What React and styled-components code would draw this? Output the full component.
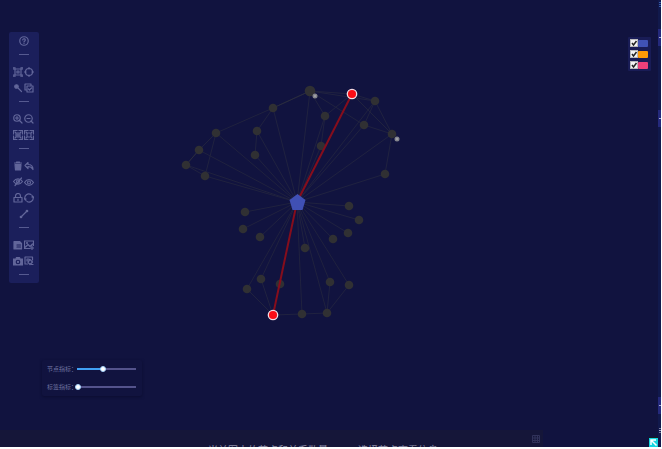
import React, { useState } from "react";
import styled, { createGlobalStyle } from "styled-components";

const Global = createGlobalStyle`
  * { box-sizing: border-box; }
  body {
    margin: 0;
    background: #fff;
    overflow: hidden;
    font-family: "Liberation Sans", "Noto Sans CJK SC", sans-serif;
  }
`;

const Page = styled.div`
  display: flex;
  height: 100vh;
  padding: 0 1px 2px 0;
`;

const Workspace = styled.main`
  position: relative;
  flex: 1;
  min-width: 0;
  display: flex;
  flex-direction: column;
  overflow: hidden;
  background: #11133f;
`;

const GraphCanvas = styled.svg`
  position: absolute;
  inset: 0;
  width: 100%;
  height: 100%;
`;

const Panels = styled.div`
  position: relative;
  flex: 1;
  min-height: 0;
  display: flex;
  justify-content: space-between;
  align-items: flex-start;
  padding: 32px 7px 0 9px;
`;

const LeftColumn = styled.div`
  display: flex;
  flex-direction: column;
  align-items: flex-start;
`;

const Toolbar = styled.div`
  width: 30px;
  padding: 1px 4px 8px;
  border-radius: 2px;
  background: #1b1f5b;
`;

const ToolRow = styled.div`
  display: flex;
  justify-content: center;
  align-items: center;
  height: 16px;
`;

const ToolButton = styled.button`
  display: grid;
  place-items: center start;
  width: 11px;
  height: 11px;
  padding: 0;
  border: 0;
  background: none;
  color: #62669a;
`;

const ToolIcon = styled.svg`
  display: block;
  width: 10px;
  height: 10px;
  fill: none;
  stroke: currentColor;
  stroke-width: 2.4;
  stroke-linecap: round;
  stroke-linejoin: round;
`;

const Divider = styled.hr`
  width: 10px;
  height: 1px;
  margin: 5px auto 9px;
  border: 0;
  background: #565a90;
  &:last-child { margin-bottom: 0; }
`;

const SliderPanel = styled.div`
  display: flex;
  flex-direction: column;
  gap: 8px;
  width: 100px;
  margin: 77px 0 0 33px;
  padding: 4px 4px 4px 5px;
  border-radius: 2px;
  box-shadow: 0 1px 3px #0b0d30;
`;

const SliderRow = styled.label`
  display: flex;
  align-items: center;
  height: 10px;
  font-size: 6px;
  line-height: 10px;
  color: #7073a0;
  white-space: nowrap;
`;

const SliderName = styled.span`
  width: 28px;
`;

const Range = styled.input`
  flex: 1;
  min-width: 0;
  height: 6px;
  margin: 0;
  appearance: none;
  border-radius: 1px;
  background:
    linear-gradient(to right, #40a0f4 ${(p) => p.value}%, #54538c ${(p) => p.value}%)
    center / calc(100% - 4px) 2px no-repeat;
  &::-webkit-slider-thumb {
    appearance: none;
    width: 6px;
    height: 6px;
    border: 1px solid #a4d2fb;
    border-radius: 50%;
    background: #fff;
  }
`;

const Legend = styled.div`
  display: flex;
  flex-direction: column;
  gap: 3px;
  margin-top: 5px;
  padding: 2px;
  border-radius: 1px;
  background: #191c56;
`;

const LegendItem = styled.label`
  display: flex;
  align-items: center;
  padding-right: 1px;
`;

const CheckBox = styled.input`
  width: 8px;
  height: 8px;
  margin: 0;
  appearance: none;
  border: 1px solid #b9b9bd;
  background: #f3f3f3;
`;

const CheckCell = styled.span`
  position: relative;
  display: flex;
`;

const Tick = styled.svg`
  position: absolute;
  inset: 0;
  width: 8px;
  height: 8px;
  fill: none;
  stroke: #222;
  pointer-events: none;
`;

const Swatch = styled.span`
  width: 10px;
  height: 7px;
  border-radius: 1px;
  background: ${(p) => p.$color};
`;

const Footer = styled.footer`
  position: relative;
  display: flex;
  justify-content: space-between;
  align-items: flex-end;
  height: 17px;
`;

const StatusBar = styled.div`
  display: flex;
  justify-content: flex-end;
  width: 82.5%;
  height: 17px;
  padding: 5px 3px 0 208px;
  background: #151639;
  overflow: hidden;
`;

const StatusText = styled.p`
  display: flex;
  flex: 1;
  gap: 30px;
  margin: 10px 0 0;
  font-size: 10px;
  line-height: 12px;
  color: #8b8ba5;
  white-space: nowrap;
`;

const GridButton = styled.button`
  display: block;
  width: 8px;
  height: 8px;
  padding: 0;
  border: 0;
  background: none;
  color: #31325a;
`;

const CornerButton = styled.button`
  display: block;
  width: 9px;
  height: 10px;
  padding: 0;
  border: 0;
  border-top: 1px solid #15201f;
  background: #14d5e0;
`;

const FillIcon = styled.svg`
  display: block;
  width: 100%;
  height: 100%;
`;

const SideStrip = styled.aside`
  flex: 0 0 3px;
  display: flex;
  flex-direction: column;
  background: #11194c;
`;

const SideBlock = styled.div`
  display: grid;
  align-items: center;
  justify-items: end;
  flex: ${(p) => p.$size} 0 0;
  background: ${(p) => (p.$tone === "header" ? "#24297c" : "#11194c")};
`;

const SideMark = styled.span`
  width: 2px;
  height: 1px;
  background: ${(p) => (p.$blue ? "#3559a8" : "#a5a8cc")};
  box-shadow: ${(p) => (p.$repeat ? "0 -2px currentColor, 0 2px currentColor" : "none")};
  color: ${(p) => (p.$blue ? "#3559a8" : "#77799c")};
`;

const glyphs = {
  help: <><circle cx="10" cy="10" r="8.5" /><path d="M7.5 8a2.5 2.5 0 1 1 4 2c-1 .7-1.5 1-1.5 2M10 14.8v.2" /></>,
  frame: <><path d="M4 4h12v12H4zM8 8h4v4H8z" /><path d="M1 2h4M2 1v4M15 2h4M18 1v4M1 18h4M2 15v4M15 18h4M18 15v4" /></>,
  lasso: <><circle cx="10" cy="10" r="7" /><path d="M10 1v3M10 16v3M1 10h3M16 10h3" /></>,
  wand: <><circle cx="7" cy="7" r="3.5" fill="currentColor" /><path d="m10 10 7 7" /></>,
  copy: <><path d="M14 5V2H2v12h3" /><path d="M6 6h12v12H6zM9 12l2 2 4-4" /></>,
  zoomIn: <><circle cx="8" cy="8" r="6.5" /><path d="m13 13 5 5M5 8h6M8 5v6" /></>,
  zoomOut: <><circle cx="9" cy="9" r="7.5" /><path d="m14 14 4 4M6 9h6" /></>,
  fit: <><path d="M8 1H1v7M12 1h7v7M1 12v7h7M19 12v7h-7" /><path d="M6 6h8v8H6zM10 8v4M8 10h4M4 4l1 1M16 4l-1 1M4 16l1-1M16 16l-1-1" /></>,
  actual: <><path d="M8 1H1v7M12 1h7v7M1 12v7h7M19 12v7h-7" /><path d="M6 6h8v8H6zM4 4l1 1M16 4l-1 1M4 16l1-1M16 16l-1-1" /></>,
  trash: <><path d="M4 7h12l-1 11H5z" fill="currentColor" /><path d="M3 4h14M7 2h6" /></>,
  undo: <path d="M8 3 2 9l6 6v-4c5 0 8 2 10 6 0-6-4-10-10-10z" />,
  eyeOff: <><path d="M1 9c5-7 13-7 18 0-5 7-13 7-18 0z" /><circle cx="10" cy="9" r="3" /><path d="M4 17 17 2" /></>,
  eye: <><path d="M1 11c5-8 13-8 18 0-5 8-13 8-18 0z" /><circle cx="10" cy="11" r="3" /></>,
  lock: <><path d="M2 9h16v9H2zM5 9V6a5 5 0 0 1 10 0v3M10 12v3" /></>,
  refresh: <><path d="M2 12a8 8 0 0 1 12-9M18 8a8 8 0 0 1-12 9" /><path d="m16 8 2-1 1 2M4 12l-2 1-1-2M16 5l1 2M4 15l-1-2" /></>,
  line: <><path d="m5 15 10-10" /><circle cx="4" cy="16" r="1.5" fill="currentColor" /><circle cx="16" cy="4" r="1.5" fill="currentColor" /></>,
  paste: <><path d="M2 3h11l4 4v11H2z" fill="currentColor" /><path d="M8 10h7M8 14h7" stroke="#1b1f5b" /></>,
  image: <><path d="M19 11V2H1v15h11M3 14l5-5 4 4 5-5M16 12v7M13 16h6" /><circle cx="6" cy="6" r="1" /></>,
  camera: <><path d="M1 6h5l1-3h6l1 3h5v12H1z" fill="currentColor" /><circle cx="10" cy="12" r="3.5" stroke="#1b1f5b" /></>,
  shapes: <><path d="M17 8V2H2v14h5" /><path d="M6 6h4v4H6zM12 7l5 5-5 5-4-4zM15 17h3" /></>,
};

const toolGroups = [
  [[["help", "帮助"]]],
  [[["frame", "框选"], ["lasso", "圈选"]], [["wand", "查找"], ["copy", "全选"]]],
  [[["zoomIn", "放大"], ["zoomOut", "缩小"]], [["fit", "适应"], ["actual", "原始大小"]]],
  [
    [["trash", "删除"], ["undo", "撤销"]],
    [["eyeOff", "隐藏"], ["eye", "显示"]],
    [["lock", "锁定"], ["refresh", "刷新"]],
    [["line", "路径"]],
  ],
  [[["paste", "导入"], ["image", "图片"]], [["camera", "快照"], ["shapes", "导出"]]],
];

const hub = [297, 202];
const nodes = {
  a: [310, 91, 5], b: [273, 108, 4], c: [257, 131, 4], d: [255, 155, 4],
  e: [216, 133, 4], f: [199, 150, 4], g: [186, 165, 4], h: [205, 176, 4],
  i: [325, 116, 4], j: [321, 146, 4], k: [375, 101, 4], l: [364, 125, 4],
  m: [392, 134, 4], n: [385, 174, 4], o: [245, 212, 4], p: [243, 229, 4],
  q: [260, 237, 4], r: [305, 248, 4], s: [333, 239, 4], t: [348, 233, 4],
  u: [359, 220, 4], v: [349, 206, 4], w: [261, 279, 4], x: [247, 289, 4],
  y: [280, 284, 4], z: [330, 282, 4], aa: [349, 285, 4], ab: [302, 314, 4],
  ac: [327, 313, 4],
};
const ends = { top: [352, 94], bottom: [273, 315] };
const places = { ...nodes, ...ends };
const links = [
  "a-b", "b-e", "b-c", "c-d", "e-f", "f-g", "g-h", "e-h", "a-i", "i-j", "a-l",
  "a-k", "a-top", "top-i", "top-k", "top-m", "k-l", "k-m", "l-m", "m-n",
  "x-bottom", "w-bottom", "bottom-ab", "ab-ac", "z-ac", "aa-ac",
];

function Line({ from, to, ...rest }) {
  return <line x1={from[0]} y1={from[1]} x2={to[0]} y2={to[1]} {...rest} />;
}

function Graph() {
  return (
    <GraphCanvas viewBox="0 0 658 447" preserveAspectRatio="xMinYMin meet" role="img" aria-label="关系图">
      <g stroke="#20223f" strokeWidth="1">
        {Object.entries(nodes).map(([id, n]) => id !== "y" && <Line key={id} from={hub} to={n} />)}
        {links.map((link) => {
          const [from, to] = link.split("-");
          return <Line key={link} from={places[from]} to={places[to]} />;
        })}
        <Line from={nodes.a} to={nodes.b} stroke="#292b3e" />
        <Line from={nodes.f} to={nodes.g} stroke="#292b3e" />
      </g>
      <g fill="#303033">
        {Object.entries(nodes).map(([id, [x, y, r]]) => (
          <circle key={id} cx={x} cy={y} r={r + 0.3} />
        ))}
      </g>
      <g stroke="#850d1c" strokeWidth="2">
        <Line from={hub} to={ends.top} />
        <Line from={hub} to={ends.bottom} />
      </g>
      <path d="M297.5 194 305.5 200 302.5 210H292.5L289.5 200Z" fill="#4050b4" />
      {Object.entries(ends).map(([id, [x, y]]) => (
        <circle key={id} cx={x} cy={y} r="4.7" fill="#fa0d16" stroke="#f3dce3" strokeWidth="1.3" />
      ))}
      {[[315, 96], [397, 139]].map(([x, y]) => (
        <g key={x}>
          <circle cx={x} cy={y} r="2.5" fill="#85868d" />
          <path d={`M${x - 1} ${y}h2`} stroke="#b5b5bd" />
        </g>
      ))}
    </GraphCanvas>
  );
}

function MetricSlider({ name, initial }) {
  const [value, setValue] = useState(initial);
  return (
    <SliderRow>
      <SliderName>{name}：</SliderName>
      <Range type="range" min="0" max="100" value={value} onChange={(e) => setValue(e.target.value)} />
    </SliderRow>
  );
}

function LegendEntry({ color, name }) {
  const [on, setOn] = useState(true);
  return (
    <LegendItem>
      <CheckCell>
        <CheckBox type="checkbox" aria-label={name} checked={on} onChange={() => setOn(!on)} />
        {on && <Tick viewBox="0 0 8 8"><path d="m2 4 1.5 2L6.500 2" strokeWidth="1.5" /></Tick>}
      </CheckCell>
      <Swatch $color={color} />
    </LegendItem>
  );
}

const sideBlocks = [
  [8, "body", "repeat"], [21, "body"], [17, "header", "mark"], [64, "body"],
  [17, "header", "mark"], [270, "body"], [17, "header", "mark"], [33, "body", "dots"],
];

export default function App() {
  return (
    <>
      <Global />
      <Page>
        <Workspace>
          <Graph />
          <Panels>
            <LeftColumn>
              <Toolbar role="toolbar">
                {toolGroups.map((rows, g) => (
                  <React.Fragment key={g}>
                    {rows.map((row, r) => (
                      <ToolRow key={r}>
                        {row.map(([icon, label]) => (
                          <ToolButton key={icon} type="button" aria-label={label}>
                            <ToolIcon viewBox="0 0 20 20">{glyphs[icon]}</ToolIcon>
                          </ToolButton>
                        ))}
                      </ToolRow>
                    ))}
                    <Divider />
                  </React.Fragment>
                ))}
              </Toolbar>
              <SliderPanel>
                <MetricSlider name="节点指标" initial={44} />
                <MetricSlider name="标签指标" initial={0} />
              </SliderPanel>
            </LeftColumn>
            <Legend>
              <LegendEntry color="#4052b6" name="蓝色节点" />
              <LegendEntry color="#ff9a05" name="橙色节点" />
              <LegendEntry color="#ec407a" name="粉色节点" />
            </Legend>
          </Panels>
          <Footer>
            <StatusBar>
              <StatusText>
                <span>当前图中的节点和关系数量</span>
                <span>选择节点查看信息</span>
              </StatusText>
              <GridButton type="button" aria-label="表格">
                <FillIcon viewBox="0 0 8 8" fill="none" stroke="currentColor">
                  <path d="M.5.5h7v7h-7zM3 0v8M5.5 0v8M0 3h8M0 5.500h8" />
                </FillIcon>
              </GridButton>
            </StatusBar>
            <CornerButton type="button" aria-label="展开">
              <FillIcon viewBox="0 0 9 9" fill="none" stroke="#fff" strokeWidth="1.5">
                <path d="M2 7V2h5M2 2l5.500 5.500" />
              </FillIcon>
            </CornerButton>
          </Footer>
        </Workspace>
        <SideStrip>
          {sideBlocks.map(([size, tone, mark], i) => (
            <SideBlock key={i} $size={size} $tone={tone}>
              {mark && <SideMark $blue={mark === "repeat"} $repeat={mark === "repeat" || mark === "dots"} />}
            </SideBlock>
          ))}
        </SideStrip>
      </Page>
    </>
  );
}
